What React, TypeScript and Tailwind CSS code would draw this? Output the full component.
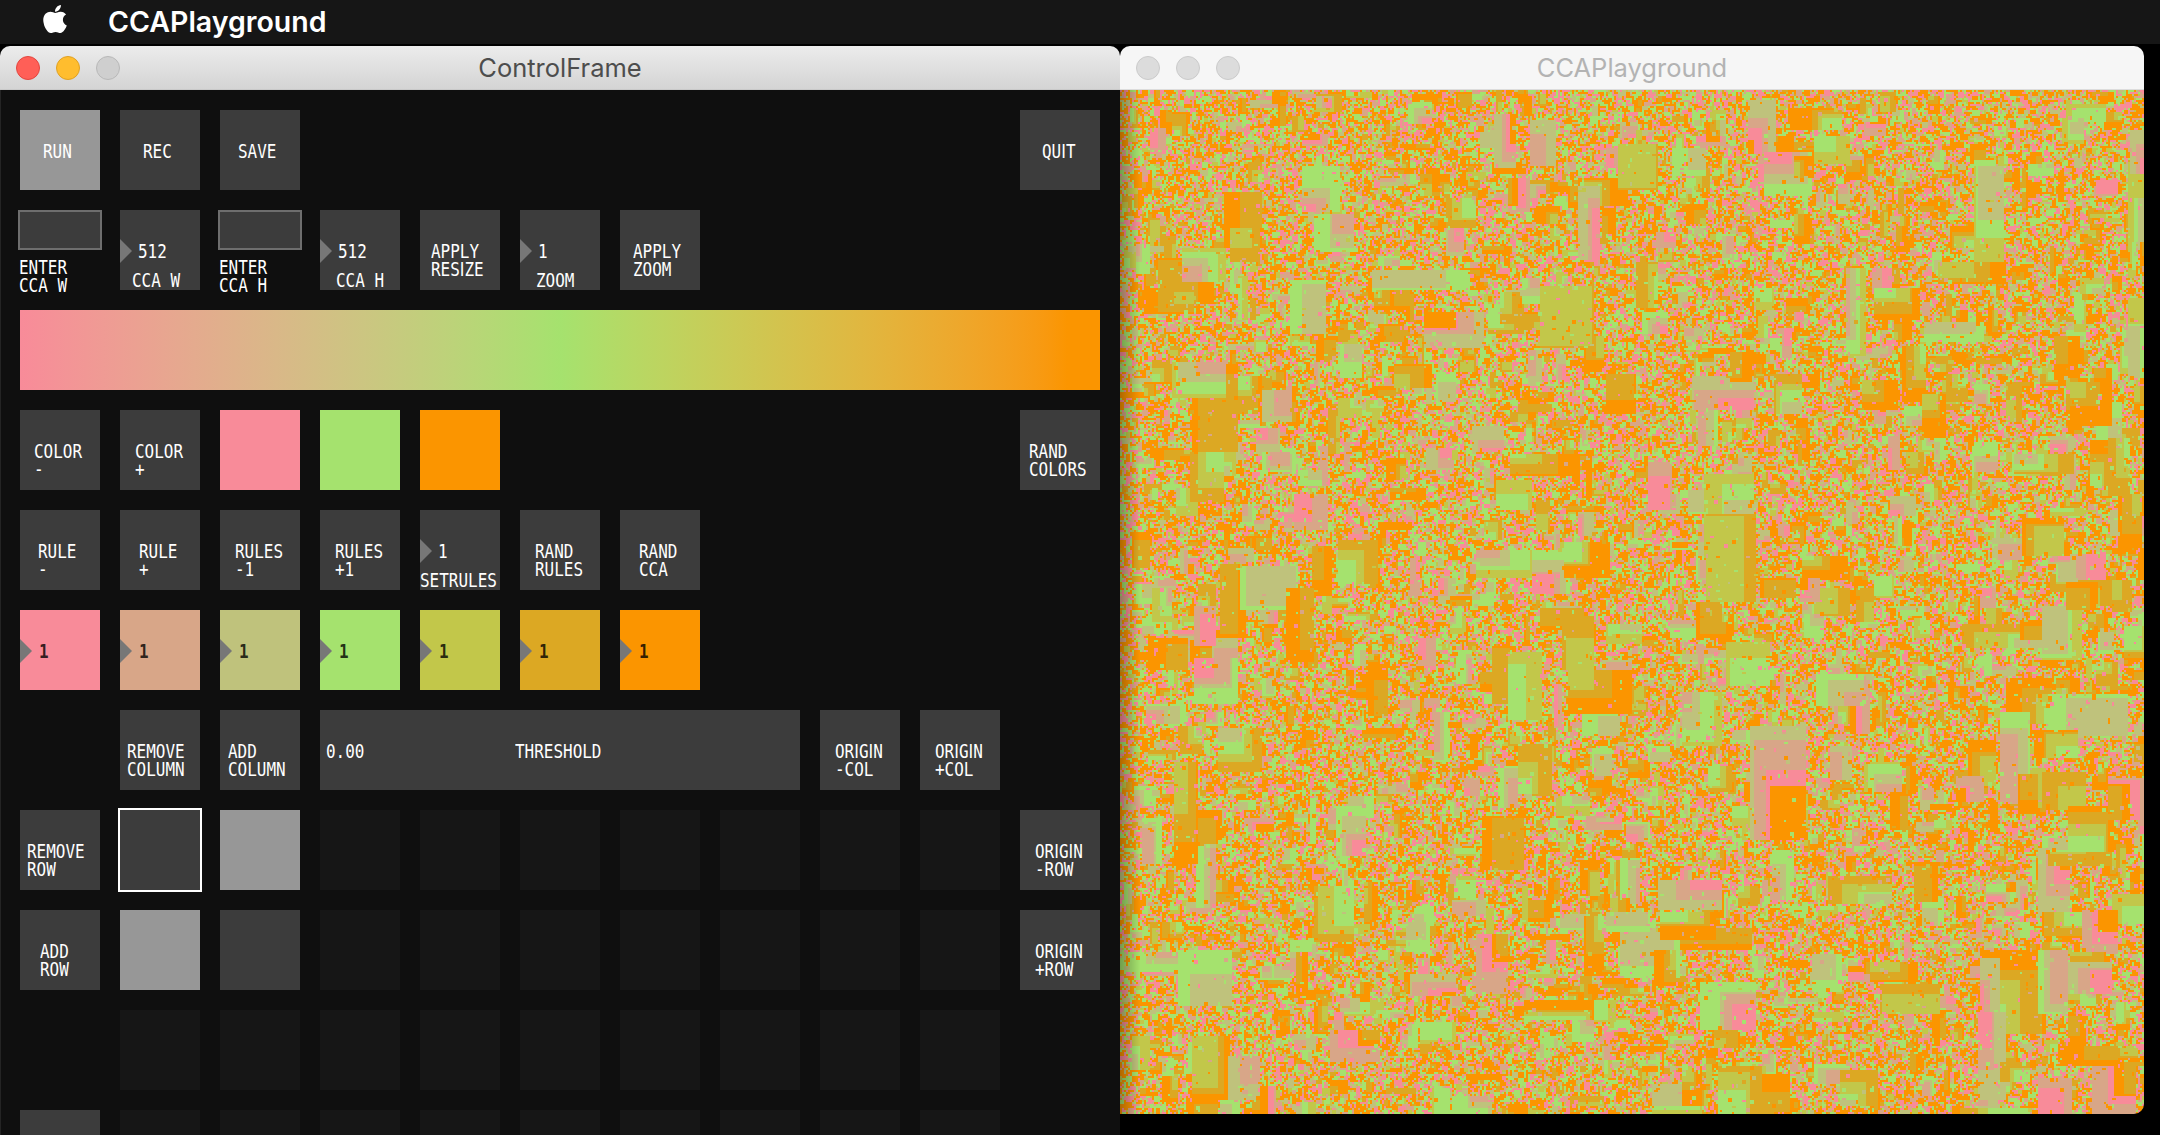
import React, { useEffect, useRef } from "react";
import { FaApple } from "react-icons/fa";

const PALETTE = ["#f88b99", "#d8a688", "#bfc27c", "#a5e26e", "#c2c74a", "#dca823", "#fb9500"];

function Label({ text, dark }: { text: string; dark?: boolean }) {
  const parts = text.split(/(I)/);
  return (
    <div
      className={`font-['DejaVu_Sans_Mono',monospace] text-[19px] leading-[18px] origin-top-left scale-x-[0.84] whitespace-pre ${
        dark ? "font-bold text-black/80" : "text-white"
      }`}
    >
      {parts.map((p, i) =>
        p === "I" ? (
          <span key={i} className="font-['Liberation_Sans',sans-serif] text-[20px] leading-[18px]">
            I
          </span>
        ) : (
          p
        )
      )}
    </div>
  );
}

function Btn({ text, x = 15, bg = "bg-[#3c3c3c]" }: { text?: string; x?: number; bg?: string }) {
  return (
    <div className={`h-20 w-20 overflow-hidden pt-8 ${bg}`} style={{ paddingLeft: x }}>
      {text ? <Label text={text} /> : null}
    </div>
  );
}

function Arrow() {
  return (
    <svg viewBox="0 0 12 24" className="absolute left-0 top-[29px] h-6 w-3">
      <polygon points="0,0 12,12 0,24" fill="#777777" />
    </svg>
  );
}

function Num({ value, caption, capX }: { value: string; caption: string; capX: number }) {
  return (
    <div className="relative h-20 w-20 overflow-hidden bg-[#3c3c3c] pt-[32px]">
      <Arrow />
      <div className="pl-[18px]">
        <Label text={value} />
      </div>
      <div className="mt-[11px]" style={{ paddingLeft: capX }}>
        <Label text={caption} />
      </div>
    </div>
  );
}

function RuleNum({ color }: { color: string }) {
  return (
    <div className="relative h-20 w-20 pl-[19px] pt-[32px]" style={{ backgroundColor: color }}>
      <Arrow />
      <Label text="1" dark />
    </div>
  );
}

function TextField({ label }: { label: string }) {
  return (
    <div className="h-20 w-20">
      <div className="-ml-[2px] h-10 w-[84px] border-2 border-[#6e6e6e] bg-[#3c3c3c]" />
      <div className="-ml-px pt-2">
        <Label text={label} />
      </div>
    </div>
  );
}

function Swatch({ color }: { color: string }) {
  return <div className="h-20 w-20" style={{ backgroundColor: color }} />;
}

function Empty() {
  return <div className="h-20 w-20 bg-[#161616]" />;
}

function Lights({ active }: { active: boolean }) {
  const grey = "border border-[#cbcbcb] bg-[#dcdcdc]";
  return (
    <div className="flex gap-4 pl-4">
      <div className={`h-6 w-6 rounded-full ${active ? "border border-[#e2463f] bg-[#ff5f57]" : grey}`} />
      <div className={`h-6 w-6 rounded-full ${active ? "border border-[#dfa023] bg-[#ffbd2e]" : grey}`} />
      <div className={`h-6 w-6 rounded-full ${active ? "border border-[#b8b8b8] bg-[#cfcfcf]" : grey}`} />
    </div>
  );
}

function makeField(ctx: CanvasRenderingContext2D) {
  const N = 512;
  let s = 1234567;
  const rnd = () => {
    s = (s + 0x6d2b79f5) | 0;
    let t = Math.imul(s ^ (s >>> 15), 1 | s);
    t = (t + Math.imul(t ^ (t >>> 7), 61 | t)) ^ t;
    return ((t ^ (t >>> 14)) >>> 0) / 4294967296;
  };
  const grid = new Uint8Array(N * N);
  const pick = () => {
    const r = rnd();
    if (r < 0.33) return 6;
    if (r < 0.56) return 3;
    if (r < 0.75) return 0;
    if (r < 0.85) return 1;
    if (r < 0.93) return 2;
    if (r < 0.97) return 4;
    return 5;
  };
  for (let y = 0; y < N; y++) for (let x = 0; x < N; x++) grid[y * N + x] = pick();
  const rect = (x0: number, y0: number, w: number, h: number, c: number) => {
    for (let y = Math.max(0, y0); y < Math.min(N, y0 + h); y++)
      for (let x = Math.max(0, x0); x < Math.min(N, x0 + w); x++) grid[y * N + x] = c;
  };
  // clumps of a few cells, so the noise is not a single-pixel grain
  for (let i = 0; i < 70000; i++) {
    rect(Math.floor(rnd() * N), Math.floor(rnd() * N), 1 + Math.floor(rnd() * 3), 1 + Math.floor(rnd() * 3), pick());
  }
  // staircase blocks: each step moves one colour along the palette
  const startColor = () => {
    const r = rnd();
    if (r < 0.36) return 6;
    if (r < 0.5) return 5;
    if (r < 0.62) return 4;
    if (r < 0.8) return 3;
    if (r < 0.92) return 2;
    return 1;
  };
  const stairs = (count: number, minS: number, maxS: number) => {
    for (let i = 0; i < count; i++) {
      let w = minS + Math.floor(rnd() * rnd() * (maxS - minS));
      let h = minS + Math.floor(rnd() * rnd() * (maxS - minS));
      if (rnd() < 0.35) h = Math.floor(h * 1.7);
      else if (rnd() < 0.35) w = Math.floor(w * 1.7);
      let x = Math.floor(rnd() * N);
      let y = Math.floor(rnd() * N);
      let c = startColor();
      const ax = rnd() < 0.5;
      const ay = rnd() < 0.5;
      const steps = 2 + Math.floor(rnd() * 3);
      for (let k = 0; k < steps && w > 1 && h > 1; k++) {
        rect(x, y, w, h, c);
        const dx = 1 + Math.floor(rnd() * (w / 2.5 + 1));
        const dy = 1 + Math.floor(rnd() * (h / 2.5 + 1));
        if (ax) x += dx;
        if (ay) y += dy;
        w -= dx;
        h -= dy;
        c = (c + 6) % 7;
      }
    }
  };
  stairs(1500, 3, 16);
  stairs(210, 10, 36);
  for (let i = 0; i < 7000; i++) {
    rect(Math.floor(rnd() * N), Math.floor(rnd() * N), 1 + Math.floor(rnd() * 2), 1 + Math.floor(rnd() * 2), pick());
  }
  const lit = PALETTE.map((p) => [parseInt(p.slice(1, 3), 16), parseInt(p.slice(3, 5), 16), parseInt(p.slice(5, 7), 16)]);
  const img = ctx.createImageData(N, N);
  for (let i = 0; i < N * N; i++) {
    const c = lit[grid[i]];
    img.data[i * 4] = c[0];
    img.data[i * 4 + 1] = c[1];
    img.data[i * 4 + 2] = c[2];
    img.data[i * 4 + 3] = 255;
  }
  ctx.putImageData(img, 0, 0);
}

function Field() {
  const ref = useRef<HTMLCanvasElement>(null);
  useEffect(() => {
    const ctx = ref.current?.getContext("2d");
    if (ctx) makeField(ctx);
  }, []);
  return (
    <div className="relative h-[1024px] w-[1024px] overflow-hidden rounded-br-[10px]">
      <canvas ref={ref} width={512} height={512} className="block h-[1024px] w-[1024px] [image-rendering:pixelated]" />
      <div className="absolute inset-y-0 left-0 w-5 bg-linear-to-r from-black/30 to-transparent" />
    </div>
  );
}

const blanks = (n: number) => Array.from({ length: n }, (_, i) => <Empty key={i} />);

export default function App() {
  return (
    <div className="h-[1135px] w-[2160px] overflow-hidden bg-black">
      <div className="flex h-11 items-center bg-[#161616] text-white">
        <FaApple className="ml-[42px] h-8 w-[26px] -translate-y-[3px]" />
        <span className="ml-10 font-['Inter',sans-serif] text-[28.5px] font-semibold leading-none">CCAPlayground</span>
      </div>
      <div className="mt-0.5 flex">
        <div className="h-[1089px] w-[1120px] overflow-hidden rounded-t-[10px] bg-[#0f0f0f]">
          <div className="relative flex h-11 items-center border-b border-[#c9c9c9] bg-linear-to-b from-[#ececec] to-[#d4d4d4]">
            <Lights active />
            <div className="absolute inset-0 flex items-center justify-center pt-0.5 font-['Inter',sans-serif] text-[25.5px] text-[#4d4d4d]">
              ControlFrame
            </div>
          </div>
          <div className="grid grid-cols-[repeat(11,80px)] auto-rows-[80px] gap-5 border-l border-[#242424] pl-[19px] pt-5">
            <Btn text="RUN" x={23} bg="bg-[#979797]" />
            <Btn text="REC" x={23} />
            <Btn text="SAVE" x={18} />
            <div className="col-start-11">
              <Btn text="QUIT" x={22} />
            </div>

            <TextField label={"ENTER\nCCA W"} />
            <Num value="512" caption="CCA W" capX={12} />
            <TextField label={"ENTER\nCCA H"} />
            <Num value="512" caption="CCA H" capX={16} />
            <Btn text={"APPLY\nRESIZE"} x={11} />
            <Num value="1" caption="ZOOM" capX={16} />
            <Btn text={"APPLY\nZOOM"} x={13} />

            <div className="col-span-11 col-start-1 bg-linear-to-r from-[#f88b99] via-[#a5e26e] to-[#fb9500] to-[97%]" />

            <Btn text={"COLOR\n-"} x={14} />
            <Btn text={"COLOR\n+"} x={15} />
            <Swatch color="#f88b99" />
            <Swatch color="#a5e26e" />
            <Swatch color="#fb9500" />
            <div className="col-start-11">
              <Btn text={"RAND\nCOLORS"} x={9} />
            </div>

            <Btn text={"RULE\n-"} x={18} />
            <Btn text={"RULE\n+"} x={19} />
            <Btn text={"RULES\n-1"} x={15} />
            <Btn text={"RULES\n+1"} x={15} />
            <Num value="1" caption="SETRULES" capX={0} />
            <Btn text={"RAND\nRULES"} x={15} />
            <Btn text={"RAND\nCCA"} x={19} />
            <div className="col-start-1 col-span-7 grid grid-cols-[repeat(7,80px)] gap-5">
              {PALETTE.map((c) => (
                <RuleNum key={c} color={c} />
              ))}
            </div>

            <div className="col-start-2">
              <Btn text={"REMOVE\nCOLUMN"} x={7} />
            </div>
            <Btn text={"ADD\nCOLUMN"} x={8} />
            <div className="col-span-5 flex h-20 bg-[#3c3c3c] pl-[6px] pt-8">
              <div className="w-[189px]">
                <Label text="0.00" />
              </div>
              <Label text="THRESHOLD" />
            </div>
            <Btn text={"ORIGIN\n-COL"} x={15} />
            <Btn text={"ORIGIN\n+COL"} x={15} />
            <div />

            <Btn text={"REMOVE\nROW"} x={7} />
            <div className="h-20 w-20 bg-[#3c3c3c] outline-2 outline-offset-0 outline-white" />
            <Swatch color="#979797" />
            {blanks(7)}
            <Btn text={"ORIGIN\n-ROW"} x={15} />

            <Btn text={"ADD\nROW"} x={20} />
            <Swatch color="#979797" />
            <Swatch color="#3c3c3c" />
            {blanks(7)}
            <Btn text={"ORIGIN\n+ROW"} x={15} />

            <div />
            {blanks(9)}
            <div />

            <Btn />
            {blanks(9)}
          </div>
        </div>
        <div className="w-[1024px]">
          <div className="relative flex h-11 items-center rounded-t-[10px] border-b border-[#dcdcdc] bg-[#f6f6f6]">
            <Lights active={false} />
            <div className="absolute inset-0 flex items-center justify-center pt-0.5 font-['Inter',sans-serif] text-[25.5px] text-[#b3b3b3]">
              CCAPlayground
            </div>
          </div>
          <Field />
        </div>
      </div>
    </div>
  );
}
